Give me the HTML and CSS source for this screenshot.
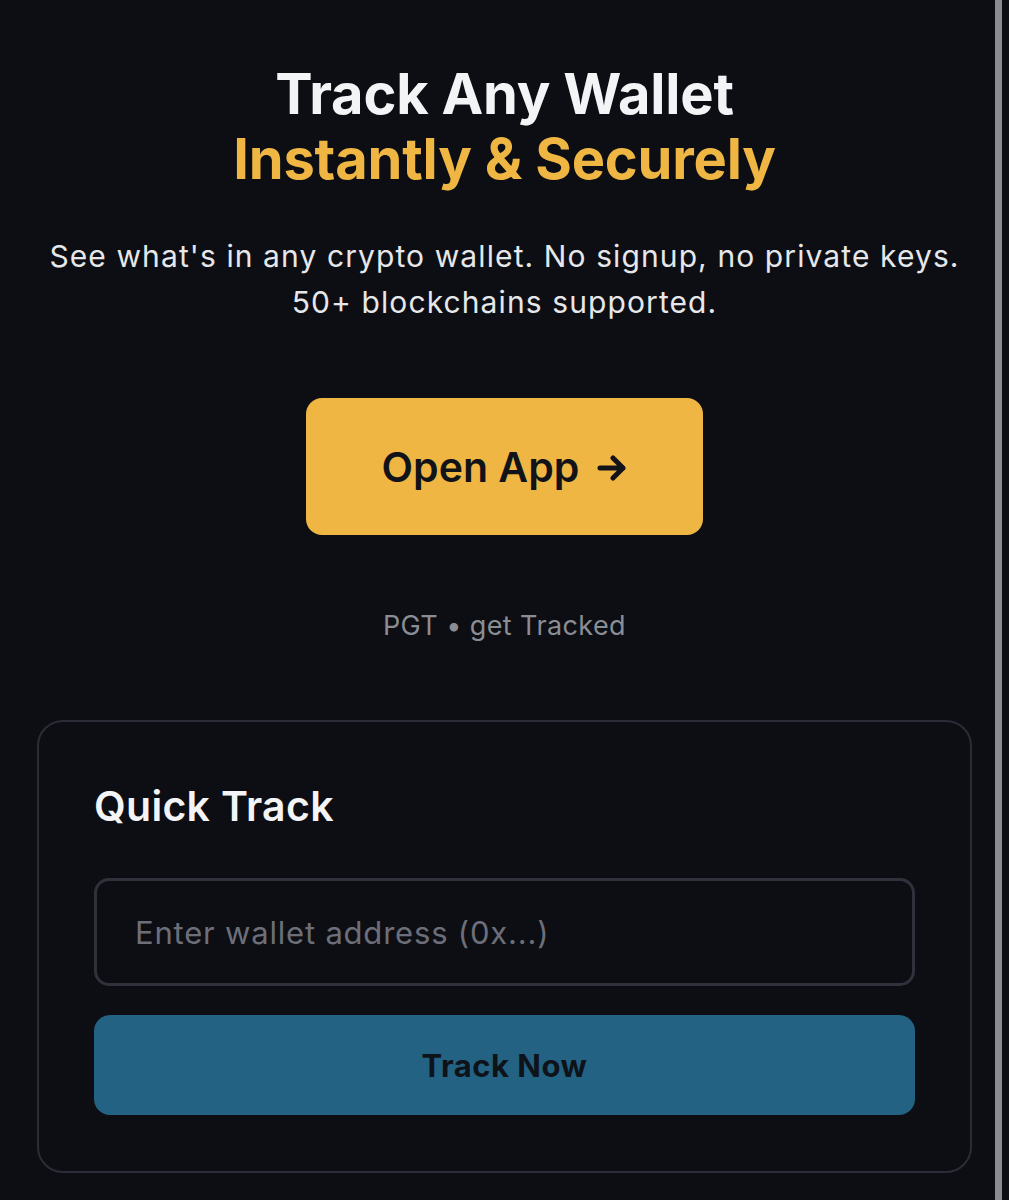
FILE: index.html
```html
<!DOCTYPE html>
<html lang="en">

<head>
    <meta charset="UTF-8">
    <title>Track Any Wallet</title>
    <link rel="stylesheet" href="styles.css">
</head>

<body>
    <div class="page">
        <div class="hero">
            <h1 class="title">
                <span class="title-main">Track Any Wallet</span>
                <span class="title-accent">Instantly &amp; Securely</span>
            </h1>
            <p class="lead">See what's in any crypto wallet. No signup, no private keys.<br>50+ blockchains supported.</p>
            <a class="open-btn" href="#">
                <span>Open App</span>
                <svg class="arrow" width="30" height="26" viewBox="0 0 30 26">
                    <path d="M3 13 H26 M16 3 L26 13 L16 23" fill="none" stroke="#111318" stroke-width="5" stroke-linecap="round" stroke-linejoin="round" />
                </svg>
            </a>
            <p class="tagline">PGT &bull; get Tracked</p>
        </div>

        <div class="card">
            <h2 class="card-title">Quick Track</h2>
            <input class="address" type="text" placeholder="Enter wallet address (0x...)">
            <button class="track-btn">Track Now</button>
        </div>
    </div>
    <!-- scrollbar strip on the right edge -->
    <div class="edge"></div>
</body>

</html>
```

FILE: styles.css
```css
* {
    padding: 0;
    margin: 0;
    box-sizing: border-box;
}

body {
    background: #0c0e13;
    font-family: Inter, "Liberation Sans", sans-serif;
    color: #f3f4f6;
    min-height: 1200px;
}

.page {
    padding: 62px 37px 0;
}

.hero {
    display: flex;
    flex-direction: column;
    align-items: center;
    text-align: center;
}

.title {
    font-size: 56px;
    line-height: 65px;
    font-weight: 700;
    letter-spacing: -0.2px;
}

.title span {
    display: block;
}

.title-main {
    color: #f3f4f6;
}

.title-accent {
    color: #efb643;
}

.lead {
    margin-top: 41px;
    font-size: 30px;
    line-height: 46px;
    letter-spacing: 1.1px;
    color: #e6e7ea;
}

.open-btn {
    margin-top: 73px;
    width: 397px;
    height: 137px;
    border-radius: 16px;
    background: #efb643;
    color: #111318;
    text-decoration: none;
    font-size: 41px;
    font-weight: 600;
    display: flex;
    align-items: center;
    justify-content: center;
    gap: 18px;
}

.arrow {
    display: block;
    margin-top: 2px;
}

.tagline {
    margin-top: 75px;
    font-size: 27px;
    line-height: 32px;
    letter-spacing: 0.4px;
    color: #8b8d94;
}

.card {
    margin-top: 78px;
    border: 2px solid #2a2d37;
    border-radius: 26px;
    padding: 60px 55px 56px;
    display: flex;
    flex-direction: column;
}

.card-title {
    font-size: 41px;
    line-height: 48px;
    font-weight: 600;
    letter-spacing: 0.3px;
    color: #f3f4f6;
}

.address {
    margin-top: 48px;
    height: 108px;
    border: 3px solid #2f313c;
    border-radius: 15px;
    background: #0c0e13;
    padding: 0 38px;
    font-family: Inter, "Liberation Sans", sans-serif;
    font-size: 31px;
    letter-spacing: 0.8px;
    color: #e6e7ea;
    outline: none;
}

.address::placeholder {
    color: #6c6f7a;
}

.track-btn {
    margin-top: 29px;
    height: 100px;
    border: 0;
    border-radius: 16px;
    background: #246283;
    color: #0d1319;
    font-family: Inter, "Liberation Sans", sans-serif;
    font-size: 31px;
    font-weight: 700;
    letter-spacing: 0.5px;
    cursor: pointer;
}

.edge {
    position: fixed;
    top: 0;
    bottom: 0;
    left: 995px;
    width: 7px;
    background: #8b8a90;
}
```
